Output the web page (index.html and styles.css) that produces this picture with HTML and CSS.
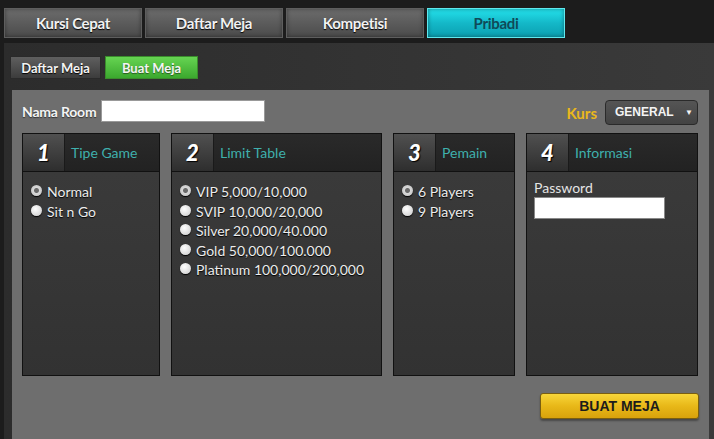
FILE: index.html
```html
<!DOCTYPE html>
<html lang="id">
<head>
    <meta charset="UTF-8">
    <title>Buat Meja</title>
    <link rel="stylesheet" href="styles.css">
</head>
<body>
    <div class="topbar">
        <button class="tab">Kursi Cepat</button>
        <button class="tab">Daftar Meja</button>
        <button class="tab">Kompetisi</button>
        <button class="tab active">Pribadi</button>
    </div>
    <div class="content">
        <div class="subtabs">
            <button class="subtab">Daftar Meja</button>
            <button class="subtab active">Buat Meja</button>
        </div>
        <div class="panel">
            <div class="room-row">
                <label class="room-label">Nama Room</label>
                <input type="text" class="room-input">
                <div class="kurs">
                    <span class="kurs-label">Kurs</span>
                    <div class="select">GENERAL <span class="arrow">&#9660;</span></div>
                </div>
            </div>
            <div class="columns">
                <div class="col col-1">
                    <div class="col-head"><span class="num">1</span><span class="title">Tipe Game</span></div>
                    <div class="col-body">
                        <label class="opt"><input type="radio" name="tipe" checked> Normal</label>
                        <label class="opt"><input type="radio" name="tipe"> Sit n Go</label>
                    </div>
                </div>
                <div class="col col-2">
                    <div class="col-head"><span class="num">2</span><span class="title">Limit Table</span></div>
                    <div class="col-body">
                        <label class="opt"><input type="radio" name="limit" checked> VIP 5,000/10,000</label>
                        <label class="opt"><input type="radio" name="limit"> SVIP 10,000/20,000</label>
                        <label class="opt"><input type="radio" name="limit"> Silver 20,000/40.000</label>
                        <label class="opt"><input type="radio" name="limit"> Gold 50,000/100.000</label>
                        <label class="opt"><input type="radio" name="limit"> Platinum 100,000/200,000</label>
                    </div>
                </div>
                <div class="col col-3">
                    <div class="col-head"><span class="num">3</span><span class="title">Pemain</span></div>
                    <div class="col-body">
                        <label class="opt"><input type="radio" name="pemain" checked> 6 Players</label>
                        <label class="opt"><input type="radio" name="pemain"> 9 Players</label>
                    </div>
                </div>
                <div class="col col-4">
                    <div class="col-head"><span class="num">4</span><span class="title">Informasi</span></div>
                    <div class="col-body info">
                        <label class="pw-label">Password</label>
                        <input type="password" class="pw-input">
                    </div>
                </div>
            </div>
            <div class="actions">
                <button class="create">BUAT MEJA</button>
            </div>
        </div>
    </div>
</body>
</html>
```

FILE: styles.css
```css
body {
    margin: 0;
    background: #1c1c1c;
    font-family: Lato, "Open Sans", sans-serif;
    color: #eee;
    height: 439px;
    overflow: hidden;
    display: flex;
    flex-direction: column;
}
button {
    font-family: inherit;
    cursor: pointer;
}
.topbar {
    display: flex;
    gap: 3px;
    padding: 8px 4px 5px 4px;
    height: 30px;
}
.tab {
    width: 138px;
    height: 30px;
    border: 1px solid #5e5e5e;
    background: linear-gradient(#6c6c6c, #4b4b4b);
    color: #f2f2f2;
    font-size: 15px;
    font-weight: bold;
    letter-spacing: -0.3px;
    text-shadow: 0 1px 1px #000;
    box-shadow: inset 0 0 4px rgba(0, 0, 0, 0.4);
}
.tab.active {
    border-color: #5fe8ee;
    background: linear-gradient(#24e2ec, #14b8c8 50%, #0b9fb0);
    color: #0f4a58;
    text-shadow: none;
}
.content {
    flex: 1;
    margin-left: 4px;
    background: linear-gradient(90deg, #2c2c2c, #3a3a3a);
    padding: 13px 5px 0 6px;
    display: flex;
    flex-direction: column;
}
.subtabs {
    display: flex;
    gap: 4px;
    margin-bottom: 11px;
}
.subtab {
    height: 23px;
    width: 91px;
    border: 1px solid #2a2a2a;
    background: linear-gradient(#5f5f5f, #3c3c3c);
    color: #f4f4f4;
    font-size: 13px;
    font-weight: bold;
    padding: 0;
    text-shadow: 0 1px 1px #000;
}
.subtab.active {
    width: 93px;
    border-color: #3a8c2c;
    background: linear-gradient(#66d452, #3ba82e);
    text-shadow: 0 1px 1px #2a5a20;
}
.panel {
    flex: 1;
    margin-left: 2px;
    background: #6e6e6e;
    padding: 10px 11px 0 10px;
}
.room-row {
    display: flex;
    align-items: center;
    height: 22px;
    margin-bottom: 11px;
}
.room-label {
    font-size: 14px;
    font-weight: bold;
    color: #f4f4f4;
    margin-right: 4px;
    letter-spacing: -0.2px;
    text-shadow: 0 1px 1px #333;
}
.room-input {
    width: 160px;
    height: 18px;
    border: 1px solid #999;
    padding: 1px;
    margin: 0;
}
.kurs {
    margin-left: auto;
    display: flex;
    align-items: center;
    gap: 8px;
    margin-top: 3px;
}
.kurs-label {
    color: #eab81a;
    font-size: 15px;
    font-weight: bold;
}
.select {
    width: 78px;
    height: 23px;
    line-height: 23px;
    padding-left: 9px;
    padding-right: 4px;
    border: 1px solid #2a2a2a;
    border-radius: 4px;
    background: linear-gradient(#555, #434343);
    font-family: "Liberation Sans", Arial, sans-serif;
    font-size: 12px;
    font-weight: bold;
    color: #f4f4f4;
    display: flex;
    justify-content: space-between;
}
.arrow {
    font-size: 8px;
}
.columns {
    display: flex;
    gap: 11px;
    height: 243px;
}
.col {
    border: 1px solid #111;
    background: #353535;
    display: flex;
    flex-direction: column;
}
.col-1 { width: 136px; }
.col-2 { width: 209px; }
.col-3 { width: 120px; }
.col-4 { width: 170px; }
.col-head {
    height: 37px;
    display: flex;
    border-bottom: 1px solid #111;
    background: linear-gradient(#2a2a2a, #222);
}
.num {
    width: 41px;
    background: linear-gradient(#505050, #2e2e2e);
    border-right: 1px solid #1a1a1a;
    text-align: center;
    line-height: 37px;
    font-size: 22px;
    font-weight: 900;
    font-style: italic;
    color: #fff;
    text-shadow: 1px 1px 1px #000;
}
.title {
    line-height: 37px;
    padding-left: 6px;
    font-size: 14px;
    color: #3fb0ad;
}
.col-body {
    flex: 1;
    padding: 10px 8px 0 7px;
    background: linear-gradient(#3a3a3a, #323232);
    display: flex;
    flex-direction: column;
}
.opt {
    display: flex;
    align-items: center;
    height: 19.5px;
    font-size: 14px;
    color: #ececec;
    text-shadow: 0 1px 1px #000;
}
.opt input {
    appearance: none;
    width: 11px;
    height: 11px;
    margin: 0 5px 2px 1px;
    border-radius: 50%;
    background: radial-gradient(circle at 40% 35%, #fff, #c8c8c8);
    box-shadow: 0 1px 1px #000;
}
.opt input:checked {
    background: radial-gradient(circle, #6a6a6a 0 2px, #d8d8d8 3px, #bbb);
}
.pw-label {
    font-size: 14px;
    color: #e4e4e4;
    margin-top: -3px;
    line-height: 18px;
}
.pw-input {
    width: 127px;
    height: 18px;
    margin: 0;
    padding: 1px;
    border: 1px solid #888;
}
.actions {
    display: flex;
    justify-content: flex-end;
    margin-top: 17px;
}
.create {
    width: 159px;
    height: 26px;
    margin-right: -1px;
    border: 1px solid #7a5e10;
    border-radius: 3px;
    background: linear-gradient(#f8d63a, #e8b818 50%, #d8a20c);
    font-family: "Liberation Sans", Arial, sans-serif;
    font-size: 14px;
    font-weight: bold;
    color: #1c1c1c;
    box-shadow: 0 2px 2px rgba(0, 0, 0, 0.35);
}
```
